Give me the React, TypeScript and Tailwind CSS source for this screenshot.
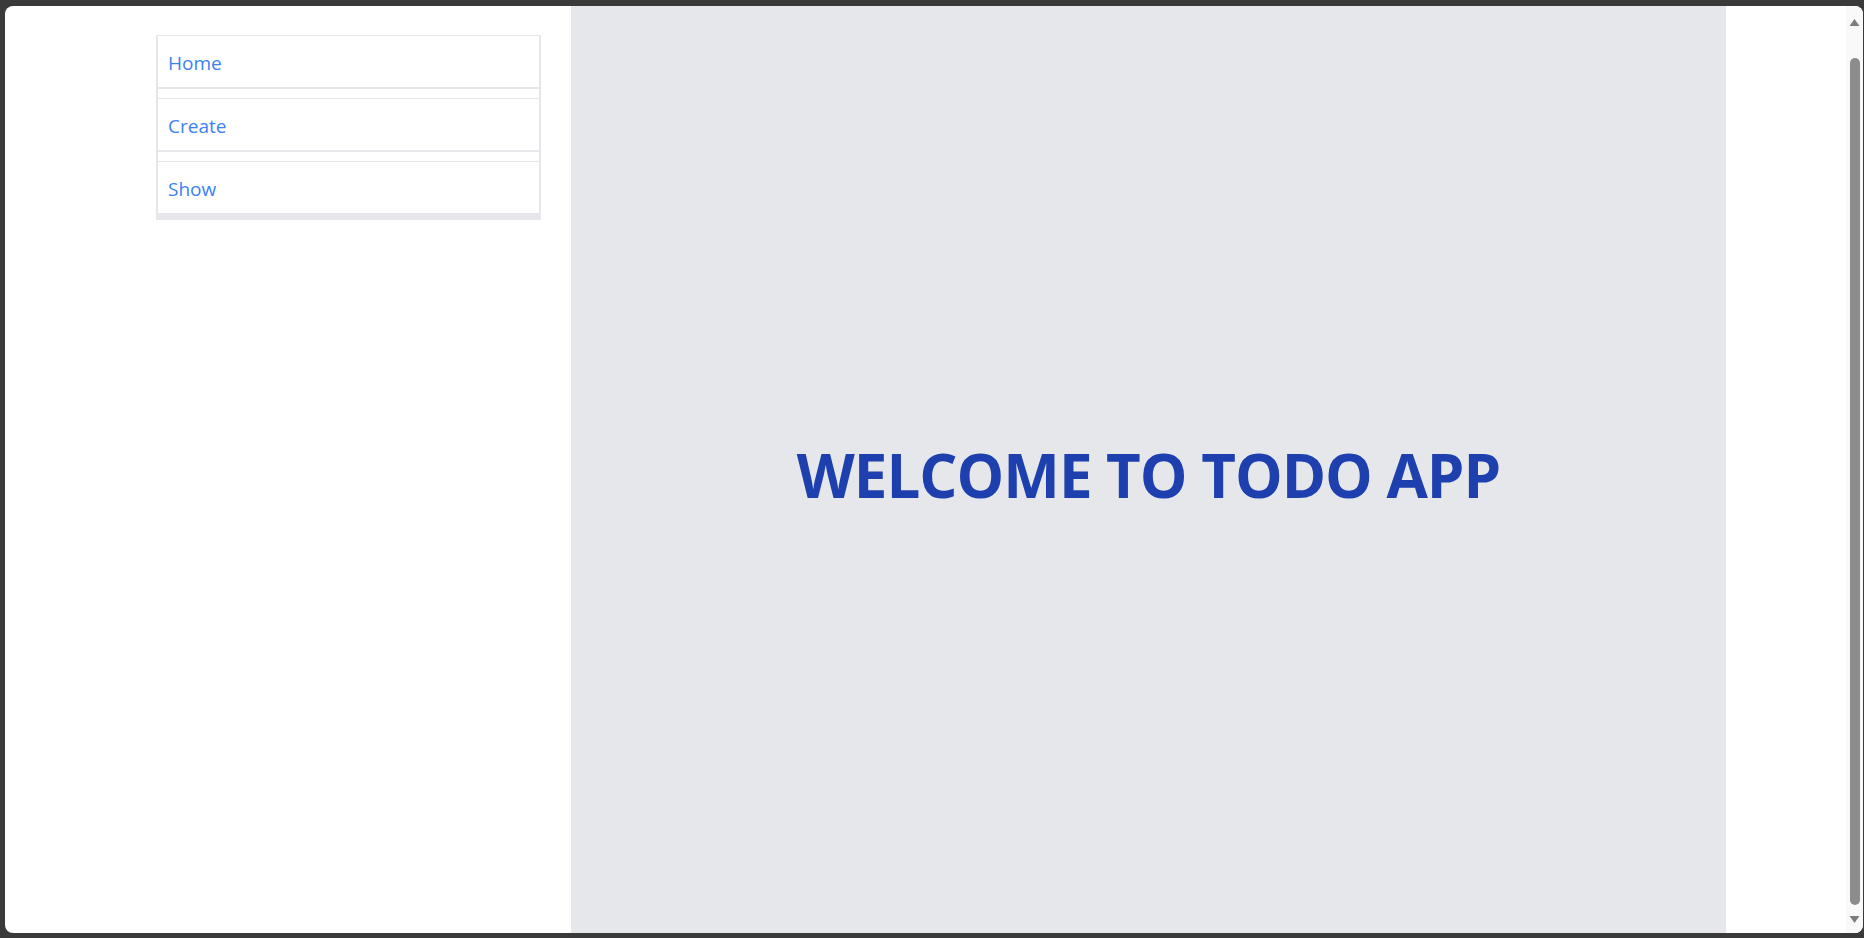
const links = ["Home", "Create", "Show"];

function SideNav() {
  return (
    <nav className="w-[385px] border-x-2 border-t border-[#e5e7eb] bg-white">
      {links.map((label, i) => (
        <div key={label} className={i > 0 ? "border-t border-[#e5e7eb]" : ""}>
          <a
            href="#"
            className="flex h-[51px] items-center px-[10px] pt-[3px] text-[19px] text-[#3b82f6]"
          >
            {label}
          </a>
          {i < links.length - 1 ? (
            <div className="h-[11px] border-t-2 border-[#e5e7eb] bg-white" />
          ) : (
            <div className="h-[7px] bg-[#e5e7eb]" />
          )}
        </div>
      ))}
    </nav>
  );
}

function Scrollbar() {
  return (
    <div className="flex w-[17px] flex-col items-center bg-[#f9f9f9]">
      <svg className="mt-[12px]" width="11" height="9" viewBox="0 0 11 9">
        <path d="M5.5 1 L10.5 8 L0.5 8 Z" fill="#7d7d7d" />
      </svg>
      <div className="mt-[31px] h-[847px] w-[10px] rounded-full bg-[#8c8c8c]" />
      <svg className="mt-[10px]" width="11" height="9" viewBox="0 0 11 9">
        <path d="M0.5 1 L10.5 1 L5.5 8 Z" fill="#7d7d7d" />
      </svg>
    </div>
  );
}

export default function App() {
  return (
    <div
      className="h-[938px] w-[1864px] overflow-hidden bg-[#3a3a3a] pb-[5px] pl-[5px] pr-[1px] pt-[6px]"
      style={{ fontFamily: '"Open Sans", "Noto Sans", sans-serif' }}
    >
      <div className="flex h-full overflow-hidden rounded-[8px] bg-white">
        <aside className="w-[566px] shrink-0 pl-[151px] pt-[29px]">
          <SideNav />
        </aside>
        <main className="flex w-[1155px] shrink-0 items-center justify-center bg-[#e5e7eb]">
          <h1 className="mt-[10px] text-[60px] font-bold tracking-[-1px] text-[#1e40af]">
            WELCOME TO TODO APP
          </h1>
        </main>
        <div className="flex-1" />
        <Scrollbar />
      </div>
    </div>
  );
}
